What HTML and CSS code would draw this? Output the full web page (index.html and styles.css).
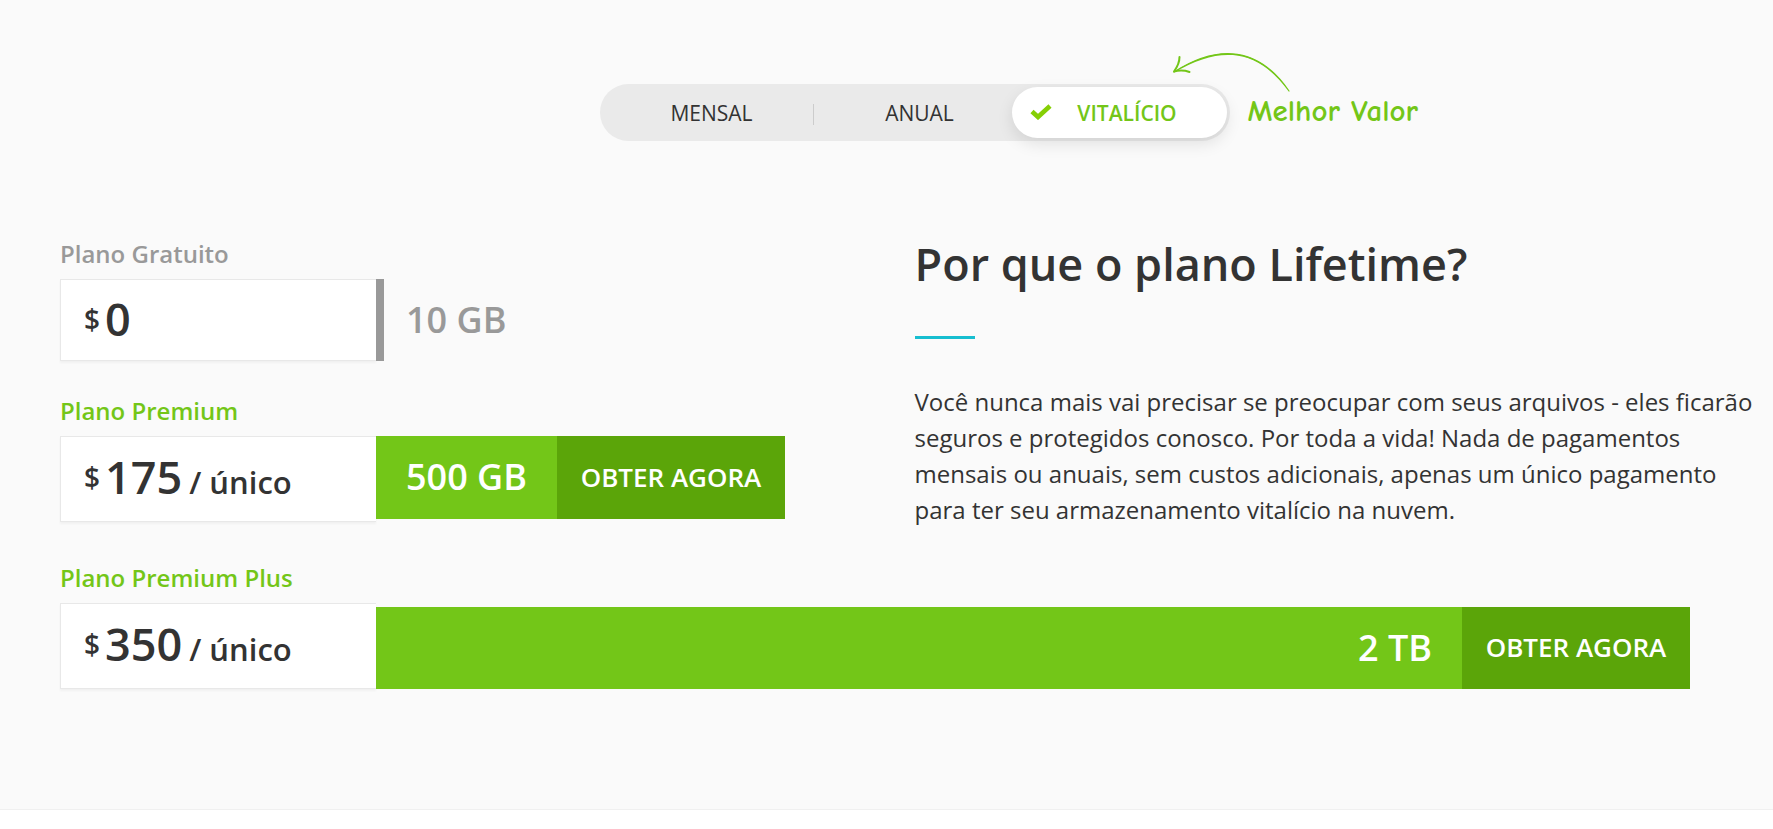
FILE: index.html
```html
<!DOCTYPE html>
<html lang="pt">
<head>
    <meta charset="UTF-8" />
    <meta name="viewport" content="width=device-width, initial-scale=1.0" />
    <title>Planos</title>
    <link rel="stylesheet" href="styles.css">
</head>
<body>
    <section class="pricing">
        <div class="periods">
            <button type="button" class="period">MENSAL</button>
            <button type="button" class="period divided">ANUAL</button>
            <button type="button" class="period active">
                <svg class="check" width="22" height="16" viewBox="0 0 22 16" aria-hidden="true">
                    <path d="M2 7.5 L8 13 L20 2" fill="none" stroke="#86cf05" stroke-width="4.6" />
                </svg>
                VITALÍCIO
            </button>
            <div class="best-value">
                <svg class="arrow" width="122" height="44" viewBox="0 0 122 44" aria-hidden="true">
                    <path d="M4 20 C40 -3 84 -12 119 39 C84 -9.500 43 -3.500 4 20Z" fill="#73c618" stroke="#73c618" stroke-width="1.2" stroke-linejoin="round" />
                    <path d="M9.500 5 Q9.500 12 4 19.500 Q12 17.500 19.500 20" fill="none" stroke="#73c618" stroke-width="2" stroke-linecap="round" stroke-linejoin="round" />
                </svg>
                <span class="best-value-text">Melhor Valor</span>
            </div>
        </div>

        <div class="content">
            <div class="plans">
                <div class="plan free">
                    <h3 class="plan-name">Plano Gratuito</h3>
                    <div class="plan-row">
                        <div class="price"><span class="currency">$</span><span class="amount">0</span></div>
                        <div class="bar"><span class="storage">10 GB</span></div>
                    </div>
                </div>
                <div class="plan premium">
                    <h3 class="plan-name">Plano Premium</h3>
                    <div class="plan-row">
                        <div class="price"><span class="currency">$</span><span class="amount">175</span><span class="term">/ único</span></div>
                        <div class="bar">
                            <span class="storage">500 GB</span>
                            <button type="button" class="get-btn">OBTER AGORA</button>
                        </div>
                    </div>
                </div>
            </div>

            <div class="why">
                <h2>Por que o plano Lifetime?</h2>
                <div class="rule"></div>
                <p>Você nunca mais vai precisar se preocupar com seus arquivos - eles ficarão seguros e protegidos conosco. Por toda a vida! Nada de pagamentos mensais ou anuais, sem custos adicionais, apenas um único pagamento para ter seu armazenamento vitalício na nuvem.</p>
            </div>

            <div class="plan plus">
                <h3 class="plan-name">Plano Premium Plus</h3>
                <div class="plan-row">
                    <div class="price"><span class="currency">$</span><span class="amount">350</span><span class="term">/ único</span></div>
                    <div class="bar">
                        <span class="storage">2 TB</span>
                        <button type="button" class="get-btn">OBTER AGORA</button>
                    </div>
                </div>
            </div>
        </div>
    </section>
</body>
</html>
```

FILE: styles.css
```css
* {
    box-sizing: border-box;
}
body {
    margin: 0;
    font-family: "Open Sans", sans-serif;
    color: #333;
    background-color: #fff;
}
h2, h3, p {
    margin: 0;
}
button {
    border: none;
    font-family: inherit;
    cursor: pointer;
}
.pricing {
    padding: 84px 4px 120px 60px;
    background-color: #fafafa;
    border-bottom: 1px solid #f0f0f0;
}

/* billing period switch */
.periods {
    position: relative;
    display: flex;
    width: 630px;
    max-width: 100%;
    margin: 0 auto;
    padding: 3px;
    border-radius: 29px;
    background-color: #eaeaea;
}
.period {
    position: relative;
    flex: 1;
    height: 51px;
    padding: 0 0 0 10px;
    background: none;
    color: #333;
    font-size: 21px;
    font-weight: 500;
}
.period.divided::before {
    content: "";
    position: absolute;
    left: 2px;
    top: 17px;
    width: 1px;
    height: 21px;
    background-color: #ccc;
}
.period.active {
    flex: 0 0 215px;
    margin-left: -7px;
    padding-left: 16px;
    border-radius: 26px;
    background-color: #fff;
    box-shadow: 0 6px 16px rgba(0, 0, 0, 0.1);
    color: #73c618;
    font-weight: 600;
}
.check {
    position: absolute;
    left: 18px;
    top: 17px;
}
.best-value {
    position: absolute;
    left: 570px;
    top: -32px;
    display: flex;
    flex-direction: column;
}
.best-value-text {
    padding-left: 78px;
    color: #73c618;
    font-family: "Comic Sans MS", "Comic Neue", Lato, sans-serif;
    font-size: 31px;
    font-weight: 700;
    line-height: 30px;
    white-space: nowrap;
}

/* plans and text */
.content {
    display: grid;
    grid-template-columns: 1fr 1fr;
    row-gap: 32px;
    margin-top: 95px;
}
.plans {
    display: flex;
    flex-direction: column;
    gap: 32px;
}
.plan-name {
    margin-bottom: 7px;
    color: #73c618;
    font-size: 24px;
    font-weight: 600;
    line-height: 36px;
}
.plan-row {
    display: flex;
    height: 86px;
}
.price {
    flex: 0 0 316px;
    padding-left: 23px;
    border: 1px solid #e8e8e8;
    border-right: none;
    background-color: #fff;
    box-shadow: 0 2px 2px rgba(0, 0, 0, 0.04);
    line-height: 80px;
    white-space: nowrap;
}
.currency {
    margin-right: 5px;
    font-size: 28px;
    font-weight: 600;
    vertical-align: 6px;
}
.amount {
    font-size: 45px;
    font-weight: 600;
}
.term {
    margin-left: 7px;
    font-size: 31px;
    font-weight: 600;
}
.bar {
    display: flex;
    height: 83px;
    background-color: #73c618;
    color: #fff;
}
.storage {
    padding: 0 30px;
    font-size: 36px;
    font-weight: 600;
    line-height: 82px;
    white-space: nowrap;
}
.get-btn {
    width: 228px;
    padding: 0 0 2px;
    background-color: #5ba509;
    color: #fff;
    font-size: 26px;
    font-weight: 600;
}
.free .plan-name {
    color: #999;
}
.free .plan-row {
    height: 82px;
}
.free .price {
    line-height: 78px;
}
.free .bar {
    height: 82px;
    border-left: 8px solid #999;
    background: none;
    color: #999;
}
.free .storage {
    padding-left: 22px;
}
.plus {
    grid-column: 1 / -1;
    padding-right: 79px;
}
.plus .bar {
    flex: 1;
    height: 82px;
    align-self: flex-end;
    justify-content: flex-end;
}

.why h2 {
    font-size: 45px;
    font-weight: 600;
    line-height: 56px;
}
.rule {
    width: 60px;
    height: 3px;
    margin: 44px 0 45px;
    background-color: #17bed0;
}
.why p {
    font-size: 24px;
    line-height: 36px;
}
```
